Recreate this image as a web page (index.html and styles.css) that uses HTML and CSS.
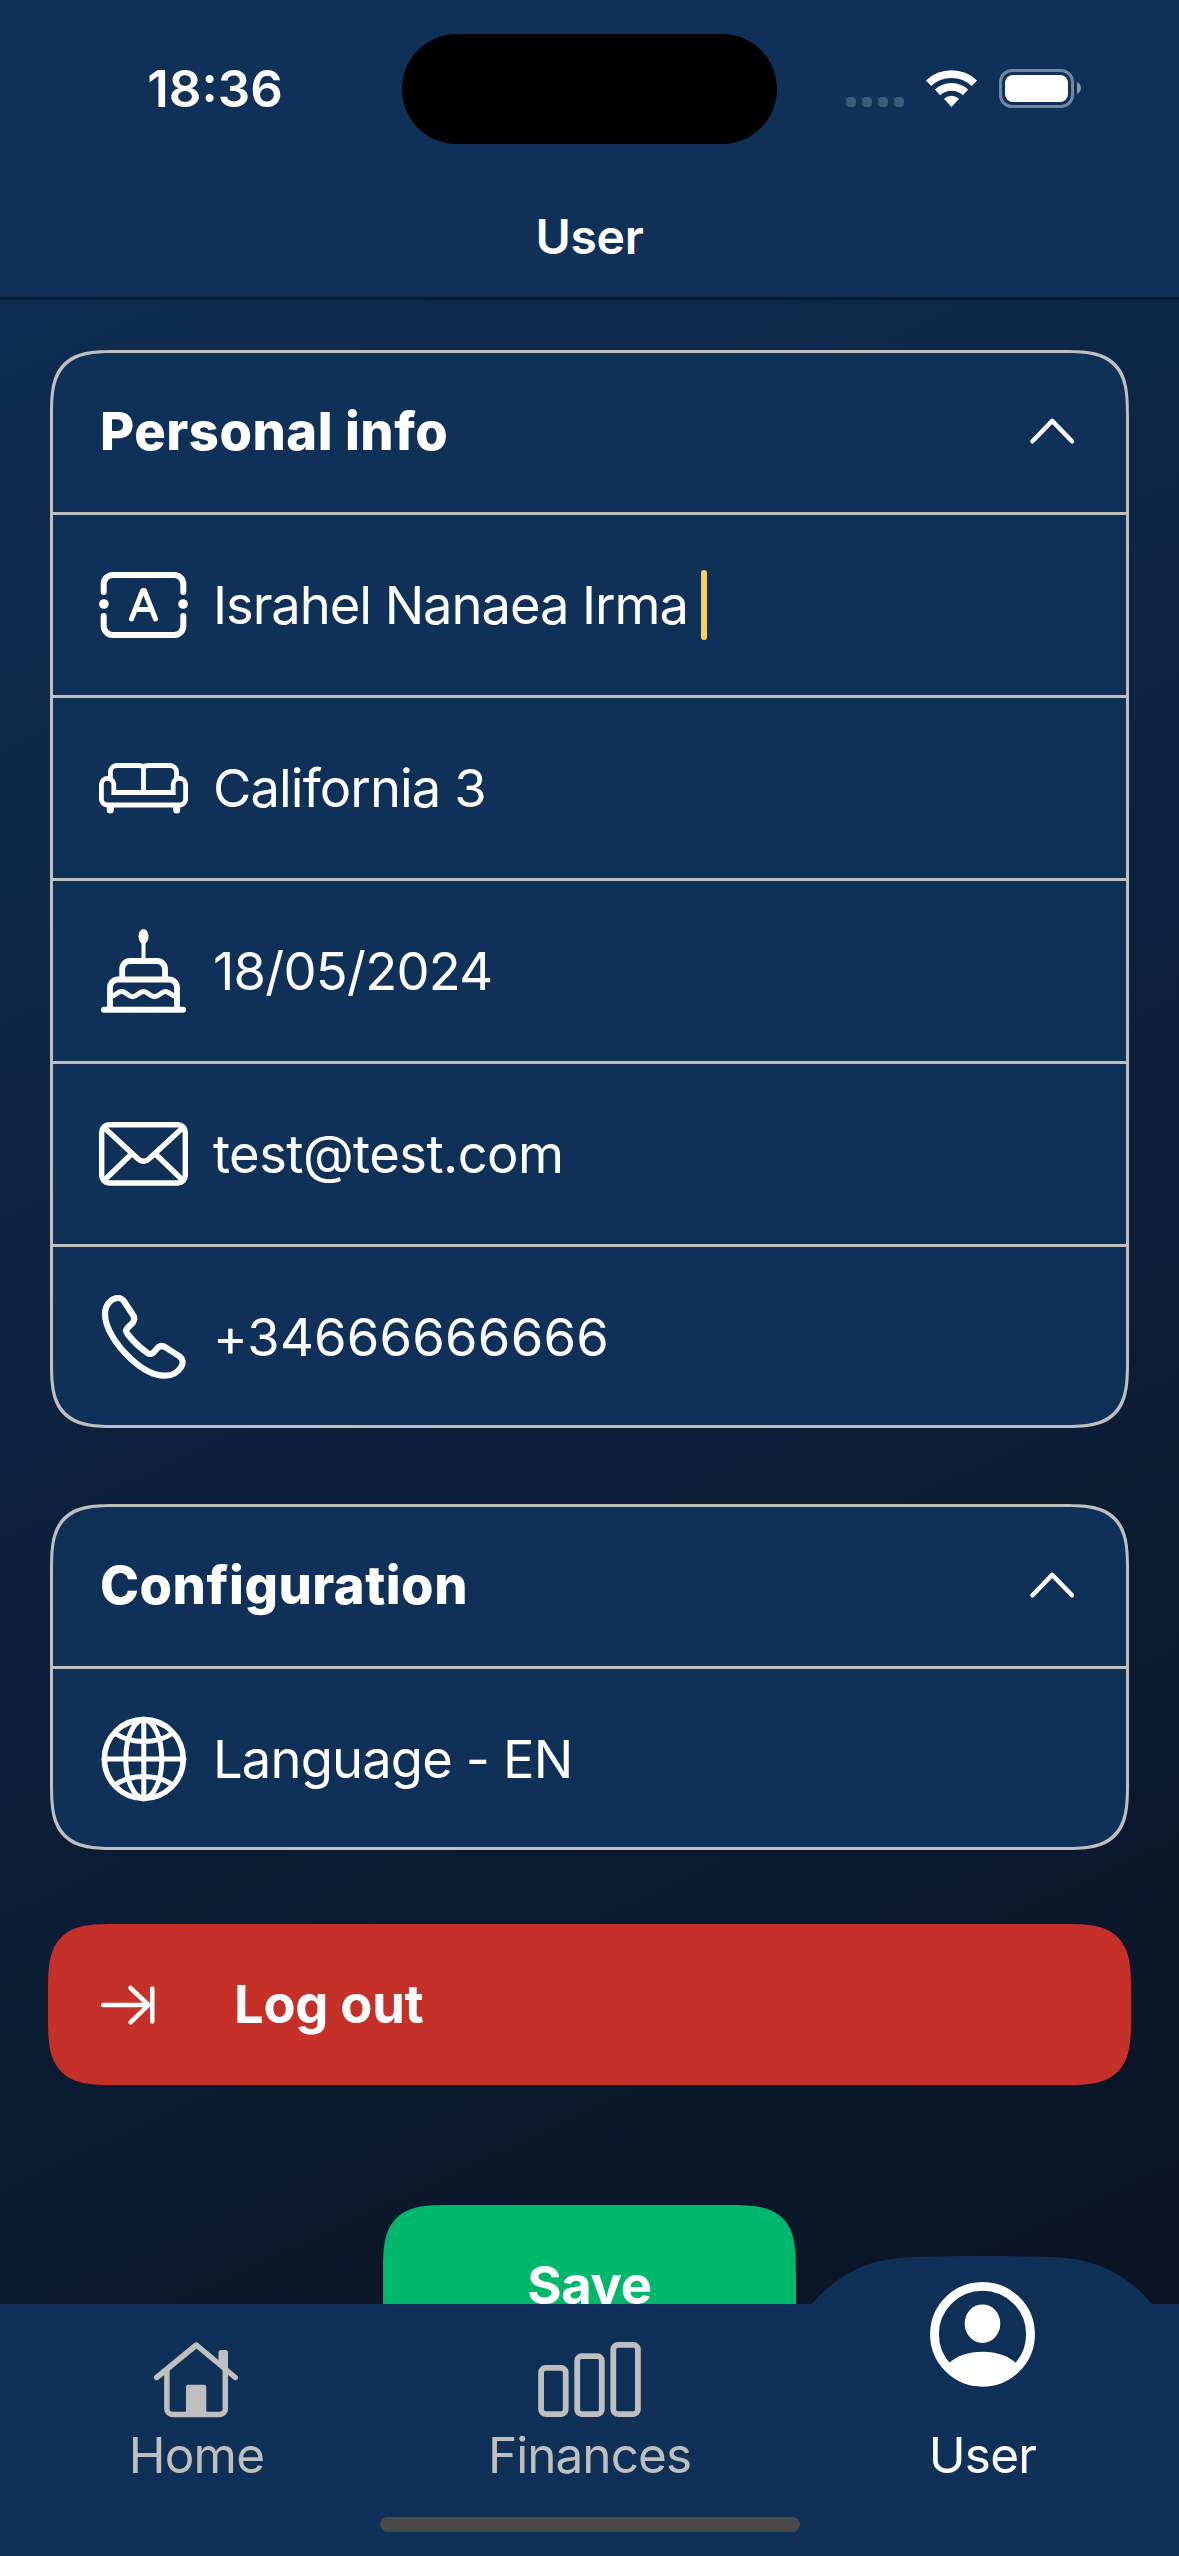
FILE: index.html
```html
<!DOCTYPE html>
<html lang="en">
<head>
<meta charset="utf-8">
<title>User</title>
<link rel="stylesheet" href="styles.css">
</head>
<body>
<div class="screen">
  <header class="top">
    <div class="status">
      <span class="time">18:36</span>
      <span class="island"></span>
      <svg class="status-icons" viewBox="846 66 236 44" width="236" height="44">
        <g fill="#fff" fill-opacity=".2">
          <rect x="846" y="96" width="10" height="10" rx="3.5"/>
          <rect x="862" y="96" width="10" height="10" rx="3.5"/>
          <rect x="878" y="96" width="10" height="10" rx="3.5"/>
          <rect x="894" y="96" width="10" height="10" rx="3.5"/>
        </g>
        <g fill="none" stroke="#fff" stroke-width="7.6">
          <path d="M928.6 82.2A33.3 33.3 0 0 1 974.4 82.2"/>
          <path d="M937.5 91.4A20.5 20.5 0 0 1 965.5 91.4"/>
        </g>
        <path fill="#fff" d="M951.5 106l-7.6-8.2q7.6-6.2 15.2 0z"/>
        <rect x="1000.5" y="69.5" width="72" height="36" rx="11.5" fill="none" stroke="#fff" stroke-opacity=".42" stroke-width="3"/>
        <rect x="1005" y="74" width="63" height="27" rx="8" fill="#fff"/>
        <path fill="#fff" fill-opacity=".5" d="M1077 81q4 2 4 6t-4 6z"/>
      </svg>
    </div>
    <h1 class="title">User</h1>
  </header>

  <main class="content">
    <section class="card">
      <div class="card-head">
        <h2>Personal info</h2>
        <svg class="chevron" viewBox="0 0 44 26"><path d="M2.5 23.3L22.2 2.9L42 23.3"/></svg>
      </div>
      <div class="row">
        <svg class="icon" viewBox="0 0 89 90">
          <path stroke-width="6" d="M4.7 32V24a9 9 0 0 1 9-9H75.3a9 9 0 0 1 9 9V32M4.7 56V66a9 9 0 0 0 9 9H75.3a9 9 0 0 0 9-9V56"/>
          <path d="M32.5 59L43.7 30.5h1.6L56.5 59M36.5 49.5h16"/>
          <circle class="solid" cx="4.9" cy="44" r="4.8"/><circle class="solid" cx="84.1" cy="44" r="4.8"/>
        </svg>
        <span class="t-name">Israhel Nanaea Irma</span><span class="caret"></span>
      </div>
      <div class="row">
        <svg class="icon" viewBox="0 0 89 90">
          <path stroke-width="4.8" d="M11.4 35V29a6.5 6.5 0 0 1 6.5-6.5H39q4 0 5.5 1.5q1.5-1.5 5.5-1.5H71a6.5 6.5 0 0 1 6.5 6.5V35M44.5 24V49.5"/>
          <path stroke-width="4.8" stroke-linejoin="miter" d="M14.8 49.5H74.2V41.5a6.2 6.1 0 0 1 12.4 0V56a6 6 0 0 1-6 6H8.4a6 6 0 0 1-6-6V41.5a6.2 6.1 0 0 1 12.4 0Z"/>
          <path stroke-width="7" d="M11.3 64v3M77.7 64v3"/>
        </svg>
        <span class="t-room">California 3</span>
      </div>
      <div class="row">
        <svg class="icon" viewBox="0 0 89 90">
          <ellipse class="solid" cx="44.5" cy="10.5" rx="5" ry="7.6"/>
          <path stroke-width="4" stroke-linecap="butt" d="M44.5 15V34"/>
          <path stroke-width="5.8" stroke-linecap="butt" d="M23.2 53V43a8 8 0 0 1 8-8H58a8 8 0 0 1 8 8V53M11 84V61.5a8 8 0 0 1 8-8H70a8 8 0 0 1 8 8V84"/>
          <path stroke-width="5" stroke-linecap="butt" d="M12 70.5C16 70.5 18 65.5 22.7 65.5S29 70.8 33.5 70.8S40 65.5 44.5 65.5S51 70.8 55.5 70.8S62 65.5 66.3 65.5S73 70.5 77 70.5"/>
          <path stroke-width="6" d="M5 83.7H84"/>
        </svg>
        <span class="t-date">18/05/2024</span>
      </div>
      <div class="row">
        <svg class="icon" viewBox="0 0 89 90">
          <rect stroke-width="5.4" x="2.7" y="15.7" width="83.6" height="58.3" rx="7.5"/>
          <path stroke-width="5.4" d="M5 18.5L37.5 48.5Q44.5 56 51.5 48.5L84 18.5M5 71.5L31.5 46M84 71.5L57.5 46"/>
        </svg>
        <span class="t-mail">test@test.com</span>
      </div>
      <div class="row last">
        <svg class="icon" viewBox="0 0 89 90">
          <path stroke-width="6.2" d="M6 22C6 12 13 6 19 6C22 6 24 7.5 25.5 10L34.3 23.5C36 26 35.5 28 34 30.5L28.5 36C26.5 38 27 40 28.5 42C34 49 42 56.5 48.5 61C50.5 62.5 53 62 54.5 60.5L58 56.5C60.5 53.8 63.5 53.5 66 55L80 64C84 67 84.5 71 82.5 74.5C79.5 80 73 84 65 83.7C56 83.5 44 78 32 67C16 52 6 35 6 22Z"/>
        </svg>
        <span class="t-phone">+34666666666</span>
      </div>
    </section>

    <section class="card">
      <div class="card-head">
        <h2>Configuration</h2>
        <svg class="chevron" viewBox="0 0 44 26"><path d="M2.5 23.3L22.2 2.9L42 23.3"/></svg>
      </div>
      <div class="row last">
        <svg class="icon" viewBox="0 0 89 90">
          <circle stroke-width="5.6" cx="44.8" cy="45" r="39.4"/>
          <ellipse cx="44.8" cy="45" rx="18" ry="39"/>
          <path d="M44.8 5V85M5 45H85M16.5 19.5Q28 27.5 44.8 27.5T73 19.5M16.5 70.5Q28 62.5 44.8 62.5T73 70.5"/>
        </svg>
        <span class="t-lang">Language - EN</span>
      </div>
    </section>

    <button class="logout">
      <svg viewBox="0 0 56 42" width="56" height="42"><path d="M4.2 21H48M31.5 4L49.5 21L31.5 38.3M53.3 4.4V37.6"/></svg>
      <span>Log out</span>
    </button>
    <button class="save">Save</button>
  </main>

  <nav class="tabs">
    <a class="tab">
      <svg class="tab-icon" viewBox="144 2282 105 105">
        <g fill="none" stroke="currentColor" stroke-width="5.5" stroke-linecap="round" stroke-linejoin="round">
          <path d="M156.7 2377.5L196.3 2345L235.3 2377.5"/>
          <path d="M166.9 2370V2409a5.5 5.5 0 0 0 5.5 5.5H219.8a5.5 5.5 0 0 0 5.5-5.5V2370"/>
        </g>
        <path fill="currentColor" d="M186 2415V2387q0-2.3 2.3-2.3h15.7q2.3 0 2.3 2.3V2415zM218.5 2362V2352.5q0-2.5 2.5-2.5h4.5q2.5 0 2.5 2.5V2372z"/>
      </svg>
      <span class="t-home">Home</span>
    </a>
    <a class="tab">
      <svg class="tab-icon" viewBox="536.5 2282 105 105">
        <g fill="none" stroke="currentColor" stroke-width="5.8">
          <rect x="540.6" y="2367.9" width="24.6" height="46.2" rx="4.5"/>
          <rect x="576.7" y="2356.2" width="24.6" height="57.9" rx="4.5"/>
          <rect x="612.8" y="2344.9" width="24.6" height="69.2" rx="4.5"/>
        </g>
      </svg>
      <span class="t-fin">Finances</span>
    </a>
    <a class="tab active">
      <svg class="bump" viewBox="0 0 342 49" width="342" height="49"><path d="M0 49C13 33 30 20 48 12C64 5 80 2.3 94 1.5C120 0 145 0 171 0S222 0 248 1.5C262 2.3 278 5 294 12C312 20 329 33 342 49Z"/></svg>
      <svg class="tab-icon" viewBox="929.7 2282 105 105">
        <circle cx="982.2" cy="2334.3" r="48" fill="none" stroke="currentColor" stroke-width="8.8"/>
        <ellipse cx="982.2" cy="2323.7" rx="17.8" ry="19.3" fill="currentColor"/>
        <path fill="currentColor" d="M948 2363.5Q961 2351.7 982.2 2351.7T1016.4 2363.5Q1005 2384 982.2 2384T948 2363.5z"/>
      </svg>
      <span class="t-user">User</span>
    </a>
    <span class="home-indicator"></span>
  </nav>
</div>
</body>
</html>
```
FILE: styles.css
```css
* { box-sizing: border-box; }

body {
  margin: 0;
  font-family: Inter, "Liberation Sans", sans-serif;
  color: #fff;
}

.screen {
  display: flex;
  flex-direction: column;
  width: 1179px;
  height: 2556px;
  overflow: hidden;
  background: linear-gradient(155.24deg, #0f3057, #0a1120);
}

/* Status bar and title */
.top {
  flex: none;
  height: 300px;
  background: #0f3057;
  border-bottom: 3px solid #06172e;
}

.status {
  display: grid;
  grid-template-columns: 402px 375px 402px;
  align-items: center;
  height: 177px;
}

.time {
  padding: 0 0 1px 28px;
  text-align: center;
  font-size: 51px;
  font-weight: 600;
}

.island {
  height: 110px;
  border-radius: 55px;
  background: #000;
}

.status-icons { margin-left: 69px; }

.title {
  margin: 0;
  text-align: center;
  font-size: 48px;
  font-weight: 600;
  line-height: 120px;
  letter-spacing: -0.3px;
}

/* Scrolling content */
.content {
  flex: 1;
  min-height: 0;
  overflow: hidden;
  display: flex;
  flex-direction: column;
  padding: 50px 50px 0;
}

.card, .logout, .save {
  flex: none;
  border-radius: 50px;
}

@supports (corner-shape: squircle) {
  .card, .logout, .save {
    border-radius: 68px;
    corner-shape: superellipse(1.67);
  }
}

.card {
  margin-bottom: 76px;
  border: 3px solid #bfbfbf;
  background: #0f3057;
}

.card + .card { margin-bottom: 74px; }

.card-head {
  display: flex;
  align-items: center;
  justify-content: space-between;
  height: 159px;
  padding: 0 52px 4px 47px;
}

.card-head h2 {
  margin: 0;
  font-size: 52.5px;
  font-weight: 800;
  letter-spacing: 0.5px;
}

.chevron {
  width: 44px;
  height: 26px;
  fill: none;
  stroke: #fff;
  stroke-width: 4.4;
  stroke-linecap: round;
  stroke-linejoin: round;
}

.row {
  display: flex;
  align-items: center;
  height: 183px;
  padding-left: 46px;
  border-top: 3px solid #bfbfbf;
  font-size: 52.5px;
}

.row.last {
  height: 181px;
  padding-top: 2px;
}

.t-name { letter-spacing: -1.07px; }
.t-room { letter-spacing: -0.9px; }
.t-date { letter-spacing: -0.75px; }
.t-mail { letter-spacing: -0.55px; }
.t-phone { letter-spacing: 0.2px; }
.t-lang { letter-spacing: -0.85px; }

.icon {
  width: 89px;
  height: 90px;
  margin-right: 25px;
  overflow: visible;
  fill: none;
  stroke: #fff;
  stroke-width: 5;
  stroke-linecap: round;
  stroke-linejoin: round;
}

.icon .solid {
  fill: #fff;
  stroke: none;
}

.caret {
  width: 6px;
  height: 70px;
  margin: 0 0 1px 13px;
  border-radius: 3px;
  background: #ffcf5c;
}

button {
  border: 0;
  padding: 0 0 2px;
  color: #fff;
  font-family: inherit;
  font-size: 52.5px;
  font-weight: 700;
  letter-spacing: -0.3px;
}

.logout {
  display: flex;
  align-items: center;
  gap: 79px;
  width: 1083px;
  height: 161px;
  margin: 0 -2px 120px;
  padding-left: 51px;
  background: #c53029;
}

.logout svg {
  position: relative;
  top: 1px;
  fill: none;
  stroke: #fff;
  stroke-width: 4.5;
  stroke-linecap: round;
  stroke-linejoin: round;
}

.save {
  align-self: center;
  width: 413px;
  height: 161px;
  background: #00b76b;
}

/* Tab bar */
.tabs {
  position: relative;
  flex: none;
  display: grid;
  grid-template-columns: repeat(3, 1fr);
  height: 252px;
  background: #0f3057;
}

.tab {
  position: relative;
  display: flex;
  flex-direction: column;
  align-items: center;
  color: #bfbfbf;
  font-size: 49.5px;
  line-height: 60px;
}

.tab.active { color: #fff; }

.t-home, .t-user { letter-spacing: -0.75px; }
.t-fin { letter-spacing: -0.95px; }

.tab-icon {
  position: relative;
  width: 105px;
  height: 105px;
  margin: -22px 0 38px;
  overflow: visible;
}

.bump {
  position: absolute;
  top: -48px;
  left: 25px;
  fill: #0f3057;
}

.home-indicator {
  position: absolute;
  left: 380px;
  bottom: 24px;
  width: 420px;
  height: 15px;
  border-radius: 8px;
  background: #494949;
}
```
